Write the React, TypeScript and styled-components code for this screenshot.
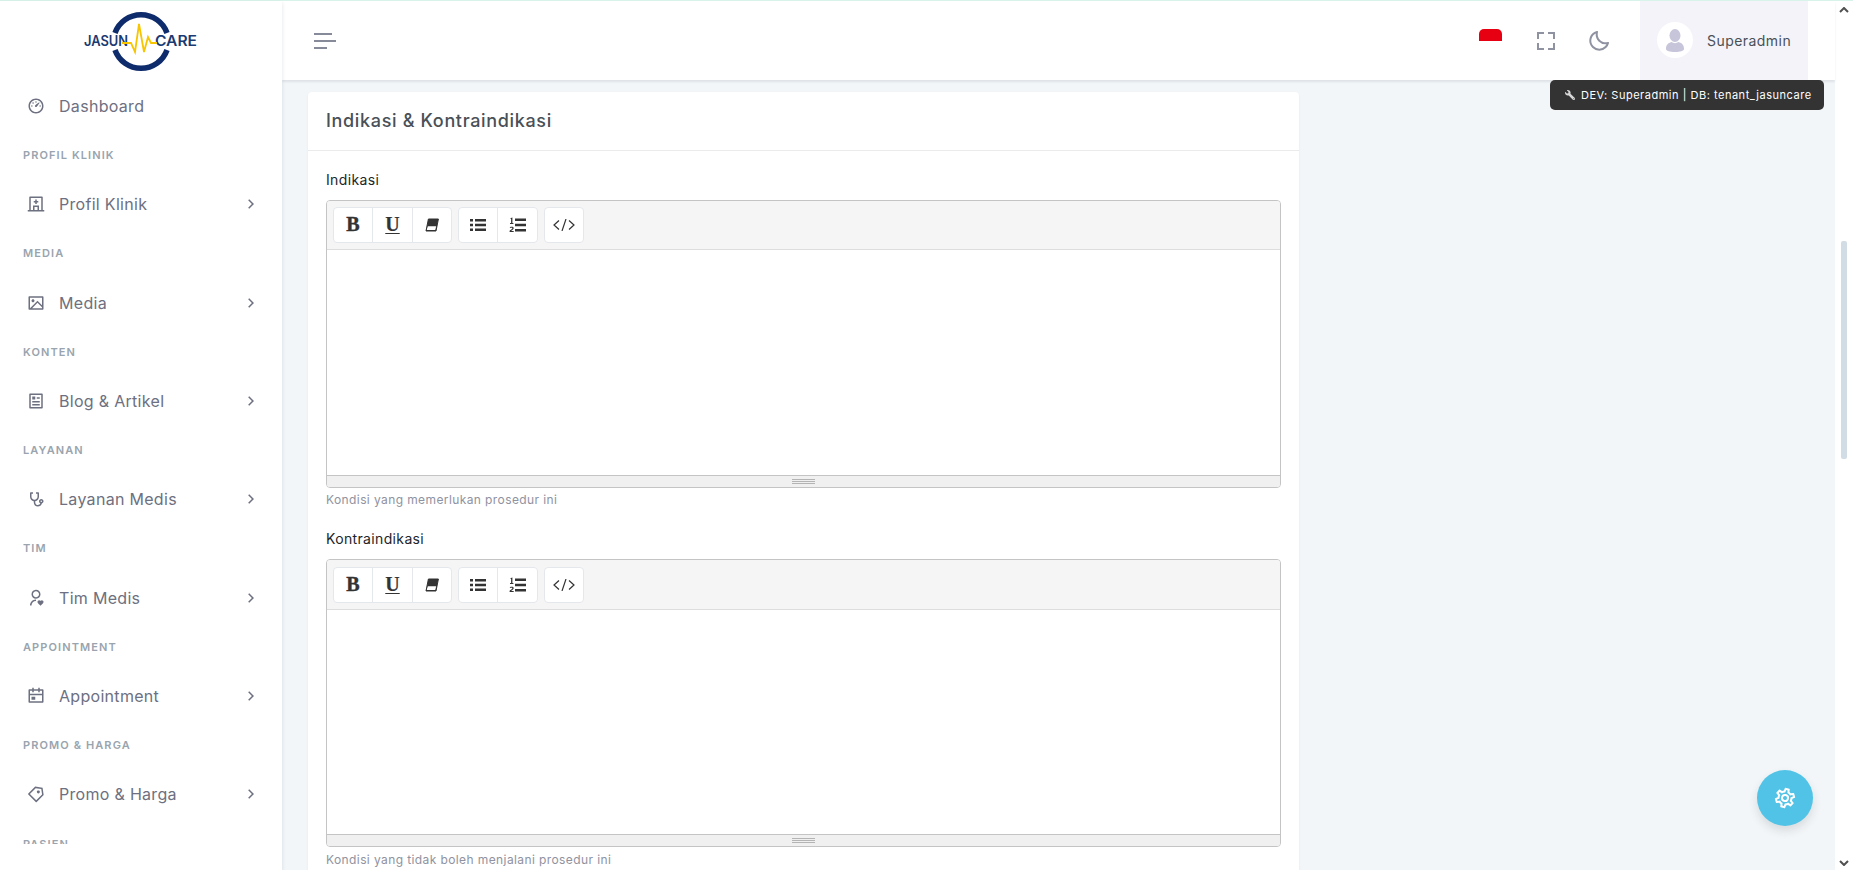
import React, { FC, ReactNode } from 'react';
import styled, { createGlobalStyle } from 'styled-components';
import {
  RiDashboard3Line,
  RiHospitalLine,
  RiImageLine,
  RiArticleLine,
  RiStethoscopeLine,
  RiUserHeartLine,
  RiCalendarEventLine,
  RiPriceTag3Line,
  RiArrowRightSLine,
} from 'react-icons/ri';
import { BiFullscreen, BiMoon } from 'react-icons/bi';
import { FaWrench } from 'react-icons/fa';

const GlobalStyle = createGlobalStyle`
  html, body {
    margin: 0;
    height: 100%;
    overflow: hidden;
    background: #fff;
    font-family: Inter, "Liberation Sans", sans-serif;
  }
  * {
    box-sizing: border-box;
  }
`;

const Page = styled.div`
  height: 870px;
  display: flex;
  flex-direction: column;
  border-top: 1px solid #d8f3e9;
`;

const Body = styled.div`
  flex: 1;
  min-height: 0;
  display: flex;
`;

const Sidebar = styled.aside`
  width: 282px;
  flex-shrink: 0;
  background: #fff;
  box-shadow: 0 2px 4px rgba(15, 34, 58, 0.12);
  z-index: 3;
`;

const LogoBox = styled.div`
  height: 80.2px;
  svg {
    display: block;
    margin-left: 71px;
  }
`;

const Nav = styled.nav`
  height: 762.8px;
  overflow: hidden;
`;

const NavItem = styled.div`
  height: 49.2px;
  display: flex;
  align-items: center;
  padding: 0 22px 0 27px;
  color: #6d7080;
  font-size: 16px;
  letter-spacing: 0.3px;
  svg:first-child {
    font-size: 18px;
    margin-right: 14px;
    flex-shrink: 0;
  }
`;

const NavText = styled.span`
  flex: 1;
`;

const NavTitle = styled.div`
  height: 49.2px;
  display: flex;
  align-items: center;
  padding-left: 23px;
  color: #99a4ae;
  font-size: 11px;
  font-weight: 600;
  letter-spacing: 1.1px;
  text-transform: uppercase;
`;

const Main = styled.div`
  flex: 1;
  min-width: 0;
  display: flex;
  flex-direction: column;
  background: #f2f6f9;
`;

const Topbar = styled.header`
  height: 79px;
  flex-shrink: 0;
  display: flex;
  align-items: stretch;
  background: #fff;
  box-shadow: 0 2px 2px rgba(56, 65, 74, 0.1);
  padding: 0 27px 0 32px;
  z-index: 2;
`;

const Hamburger = styled.div`
  align-self: center;
  display: flex;
  flex-direction: column;
  gap: 5px;
`;

const HamburgerLine = styled.span<{ $width: number }>`
  display: block;
  height: 2px;
  width: ${(p) => p.$width}px;
  background: #878a99;
`;

const TopbarRight = styled.div`
  margin-left: auto;
  display: flex;
  align-items: stretch;
`;

const Flag = styled.div`
  align-self: flex-start;
  margin: 28px 32.5px 0 0;
  width: 23px;
  height: 12px;
  background: #e70011;
  border-radius: 5px 5px 0 0;
`;

const TopIcon = styled.div<{ $gap: number }>`
  align-self: center;
  display: flex;
  color: #8f92a0;
  font-size: 24px;
  margin-right: ${(p) => p.$gap}px;
`;

const UserBox = styled.div`
  width: 168px;
  display: flex;
  align-items: center;
  gap: 14px;
  padding: 0 0 1px 17px;
  background: #f3f3f9;
  color: #495057;
  font-size: 14px;
  letter-spacing: 0.45px;
`;

const Avatar = styled.div`
  width: 36px;
  height: 36px;
  border-radius: 50%;
  background: #fff;
  display: flex;
  align-items: center;
  justify-content: center;
`;

const Content = styled.main`
  flex: 1;
  min-height: 0;
  overflow: hidden;
  padding: 12px 0 0 26px;
`;

const Card = styled.section`
  width: 991px;
  background: #fff;
  border-radius: 4px 4px 0 0;
  box-shadow: 0 1px 2px rgba(56, 65, 74, 0.08);
`;

const CardHeader = styled.h2`
  margin: 0;
  height: 59px;
  display: flex;
  align-items: center;
  padding: 0 18px 2px;
  border-bottom: 1px solid #e9ebec;
  color: #495057;
  font-size: 18px;
  font-weight: 500;
  letter-spacing: 0.66px;
`;

const CardBody = styled.div`
  padding: 18.6px 18px 20px;
`;

const Field = styled.div`
  margin-bottom: 20.2px;
`;

const Label = styled.div`
  color: #212529;
  font-size: 14px;
  line-height: 20px;
  letter-spacing: 0.35px;
  margin-bottom: 10px;
`;

const Help = styled.div`
  margin-top: 3.6px;
  color: #8f92a0;
  font-size: 12px;
  line-height: 18px;
  letter-spacing: 0.4px;
`;

const Editor = styled.div`
  border: 1px solid #c4c4c4;
  border-radius: 4px;
  overflow: hidden;
`;

const Toolbar = styled.div`
  display: flex;
  gap: 6px;
  height: 49.4px;
  padding: 6.4px 6px;
  background: #f5f5f5;
  border-bottom: 1px solid #dddddd;
`;

const ToolGroup = styled.div`
  display: flex;
  height: 36px;
  background: #fff;
  border: 1px solid #e4e7eb;
  border-radius: 4px;
`;

const ToolButton = styled.div<{ $width: number }>`
  width: ${(p) => p.$width}px;
  display: flex;
  align-items: center;
  justify-content: center;
  color: #333;
  & + & {
    border-left: 1px solid #e4e7eb;
  }
`;

const BoldGlyph = styled.span`
  font-family: "Liberation Serif", serif;
  font-weight: 700;
  font-size: 20px;
  -webkit-text-stroke: 0.4px #333;
`;

const UnderlineGlyph = styled(BoldGlyph)`
  text-decoration: underline;
  text-decoration-thickness: 1px;
  text-underline-offset: 2px;
  -webkit-text-stroke: 0.2px #333;
`;

const EditArea = styled.div`
  height: 224.6px;
  background: #fff;
`;

const StatusBar = styled.div`
  height: 12px;
  background: #f0f0f0;
  border-top: 1px solid #c4c4c4;
  display: flex;
  flex-direction: column;
  align-items: center;
  justify-content: center;
  gap: 1px;
`;

const Grip = styled.span`
  display: block;
  width: 23px;
  height: 1px;
  background: #b4b4b4;
`;

const Scrollbar = styled.div`
  width: 18px;
  flex-shrink: 0;
  background: #fff;
  position: relative;
  color: #505050;
`;

const ScrollArrow = styled.svg<{ $bottom?: boolean }>`
  position: absolute;
  left: 4px;
  ${(p) => (p.$bottom ? 'bottom: 4px;' : 'top: 6px;')}
`;

const ScrollThumb = styled.div`
  position: absolute;
  left: 6px;
  top: 240px;
  width: 6px;
  height: 218px;
  border-radius: 2px;
  background: #d2dce5;
`;

const DevBadge = styled.div`
  position: fixed;
  left: 1550px;
  top: 80px;
  width: 274px;
  height: 30px;
  display: flex;
  align-items: center;
  gap: 6px;
  padding-left: 15px;
  background: #333;
  border-radius: 5px;
  color: #fff;
  font-size: 11px;
  letter-spacing: 0.52px;
  white-space: nowrap;
  z-index: 5;
  svg {
    font-size: 10px;
    color: #d8d8d8;
    transform: scaleX(-1);
  }
`;

const Fab = styled.div`
  position: fixed;
  left: 1757px;
  top: 770px;
  width: 56px;
  height: 56px;
  border-radius: 50%;
  background: #50c3e6;
  box-shadow: 0 5px 10px rgba(30, 32, 37, 0.12);
  display: flex;
  align-items: center;
  justify-content: center;
  svg {
    transform: rotate(14deg);
  }
`;

const Logo: FC = () => (
  <svg width="140" height="80" viewBox="71 1 140 80">
    <path
      d="M115 33 A27.500 27 0 0 1 167 33 M167 50 A27.500 27 0 0 1 115 50"
      fill="none"
      stroke="#0e2c6b"
      strokeWidth="5.5"
    />
    <text
      x="84"
      y="46"
      fill="#1a3a72"
      fontFamily="Inter, sans-serif"
      fontWeight="600"
      fontSize="14"
      textLength={44}
      lengthAdjust="spacingAndGlyphs"
    >
      JASUN
    </text>
    <text
      x="155"
      y="46"
      fill="#1a3a72"
      fontFamily="Inter, sans-serif"
      fontWeight="600"
      fontSize="14"
      textLength={42}
      lengthAdjust="spacingAndGlyphs"
    >
      CARE
    </text>
    <polyline
      points="122,43 131,43 135,52 139,24 144,52 148,37 151,43 157,43"
      fill="none"
      stroke="#f7c600"
      strokeWidth="1.8"
    />
  </svg>
);

type MenuLink = { icon: ReactNode; text: string; arrow?: boolean };

const menu: (MenuLink | string)[] = [
  { icon: <RiDashboard3Line />, text: 'Dashboard' },
  'Profil Klinik',
  { icon: <RiHospitalLine />, text: 'Profil Klinik', arrow: true },
  'Media',
  { icon: <RiImageLine />, text: 'Media', arrow: true },
  'Konten',
  { icon: <RiArticleLine />, text: 'Blog & Artikel', arrow: true },
  'Layanan',
  { icon: <RiStethoscopeLine />, text: 'Layanan Medis', arrow: true },
  'Tim',
  { icon: <RiUserHeartLine />, text: 'Tim Medis', arrow: true },
  'Appointment',
  { icon: <RiCalendarEventLine />, text: 'Appointment', arrow: true },
  'Promo & Harga',
  { icon: <RiPriceTag3Line />, text: 'Promo & Harga', arrow: true },
  'Pasien',
];

const PersonIcon: FC = () => (
  <svg width="18" height="23" viewBox="0 0 18 23" fill="#c6c5d9">
    <ellipse cx="9" cy="6.500" rx="5.500" ry="6.500" />
    <path d="M0 20c0-4 2-6 5.500-7 2 1.500 5 1.500 7 0 3.500 1 5.500 3 5.500 7 0 2-4 3-9 3s-9-1-9-3z" />
  </svg>
);

const EraserIcon: FC = () => (
  <svg width="14" height="14" viewBox="0 0 14 14">
    <path d="M3.400 1h10l-2.400 12H1z" fill="#333" />
    <path d="M2.600 8.200h8.600l-.9 3.800H1.800z" fill="#fff" />
    <path d="M3.400 1h10l-2.400 12H1z" fill="none" stroke="#333" strokeWidth="1" />
  </svg>
);

const ListIcon: FC = () => (
  <svg width="16" height="14" viewBox="0 0 16 14" fill="#333">
    <path d="M0 1h3v2.400H0zM5 1h11v2.400H5zM0 5.800h3v2.400H0zM5 5.800h11v2.400H5zM0 10.600h3V13H0zM5 10.600h11V13H5z" />
  </svg>
);

const OrderedIcon: FC = () => (
  <svg width="17" height="16" viewBox="0 0 17 16" fill="#333">
    <path d="M6 1.500h11v2.400H6zM6 6.800h11v2.400H6zM6 12.100h11v2.400H6z" />
    <path d="M2 1l1.400-.6V6h1v1H1V6h1.100V2H1.200zM.6 15v-1c0-1 2.800-1.700 2.800-2.800 0-.6-1.600-.6-2.500 0V10.300c1.300-.7 3.800-.7 3.800.9 0 1.300-1.900 2-2.600 2.800h2.600v1z" />
  </svg>
);

const CodeIcon: FC = () => (
  <svg width="22" height="12" viewBox="0 0 22 12" fill="none" stroke="#333" strokeWidth="1.200">
    <path d="M6 1.500 1 6l5 4.500M16 1.500 21 6l-5 4.500M13 0 9 12" />
  </svg>
);

const CogIcon: FC = () => (
  <svg width="24" height="24" viewBox="0 0 24 24" fill="#fff">
    <path d="M12,8A4,4 0 0,1 16,12A4,4 0 0,1 12,16A4,4 0 0,1 8,12A4,4 0 0,1 12,8M12,10A2,2 0 0,0 10,12A2,2 0 0,0 12,14A2,2 0 0,0 14,12A2,2 0 0,0 12,10M10,22C9.75,22 9.54,21.82 9.5,21.58L9.13,18.93C8.5,18.68 7.96,18.34 7.44,17.94L4.95,18.95C4.73,19.03 4.46,18.95 4.34,18.73L2.34,15.27C2.21,15.05 2.27,14.78 2.46,14.63L4.57,12.97L4.5,12L4.57,11L2.46,9.37C2.27,9.22 2.21,8.95 2.34,8.73L4.34,5.27C4.46,5.05 4.73,4.96 4.95,5.05L7.44,6.05C7.96,5.66 8.5,5.32 9.13,5.07L9.5,2.42C9.54,2.18 9.75,2 10,2H14C14.25,2 14.46,2.18 14.5,2.42L14.87,5.07C15.5,5.32 16.04,5.66 16.56,6.06L19.05,5.05C19.27,4.96 19.54,5.05 19.66,5.27L21.66,8.73C21.79,8.95 21.73,9.22 21.54,9.37L19.43,11L19.5,12L19.43,13L21.54,14.63C21.73,14.78 21.79,15.05 21.66,15.27L19.66,18.73C19.54,18.95 19.27,19.04 19.05,18.95L16.56,17.95C16.04,18.34 15.5,18.68 14.87,18.93L14.5,21.58C14.46,21.82 14.25,22 14,22H10M11.25,4L10.88,6.61C9.68,6.86 8.62,7.5 7.85,8.39L5.44,7.35L4.69,8.65L6.8,10.2C6.4,11.37 6.4,12.64 6.8,13.8L4.68,15.36L5.43,16.66L7.86,15.62C8.63,16.5 9.68,17.14 10.87,17.38L11.24,20H12.76L13.13,17.39C14.32,17.14 15.37,16.5 16.14,15.62L18.57,16.66L19.32,15.36L17.2,13.81C17.6,12.64 17.6,11.37 17.2,10.2L19.31,8.65L18.56,7.35L16.15,8.39C15.38,7.5 14.32,6.86 13.12,6.62L12.75,4H11.25Z" />
  </svg>
);

const RichEditor: FC = () => (
  <Editor>
    <Toolbar>
      <ToolGroup>
        <ToolButton $width={38}>
          <BoldGlyph>B</BoldGlyph>
        </ToolButton>
        <ToolButton $width={40}>
          <UnderlineGlyph>U</UnderlineGlyph>
        </ToolButton>
        <ToolButton $width={39}>
          <EraserIcon />
        </ToolButton>
      </ToolGroup>
      <ToolGroup>
        <ToolButton $width={38}>
          <ListIcon />
        </ToolButton>
        <ToolButton $width={40}>
          <OrderedIcon />
        </ToolButton>
      </ToolGroup>
      <ToolGroup>
        <ToolButton $width={38}>
          <CodeIcon />
        </ToolButton>
      </ToolGroup>
    </Toolbar>
    <EditArea />
    <StatusBar>
      <Grip />
      <Grip />
      <Grip />
    </StatusBar>
  </Editor>
);

const App: FC = () => (
  <>
    <GlobalStyle />
    <Page>
      <Body>
        <Sidebar>
          <LogoBox>
            <Logo />
          </LogoBox>
          <Nav>
            {menu.map((entry, i) =>
              typeof entry === 'string' ? (
                <NavTitle key={i}>{entry}</NavTitle>
              ) : (
                <NavItem key={i}>
                  {entry.icon}
                  <NavText>{entry.text}</NavText>
                  {entry.arrow && <RiArrowRightSLine size={18} />}
                </NavItem>
              ),
            )}
          </Nav>
        </Sidebar>
        <Main>
          <Topbar>
            <Hamburger>
              <HamburgerLine $width={18} />
              <HamburgerLine $width={22} />
              <HamburgerLine $width={13} />
            </Hamburger>
            <TopbarRight>
              <Flag />
              <TopIcon $gap={29}>
                <BiFullscreen />
              </TopIcon>
              <TopIcon $gap={29}>
                <BiMoon />
              </TopIcon>
              <UserBox>
                <Avatar>
                  <PersonIcon />
                </Avatar>
                Superadmin
              </UserBox>
            </TopbarRight>
          </Topbar>
          <Content>
            <Card>
              <CardHeader>Indikasi &amp; Kontraindikasi</CardHeader>
              <CardBody>
                <Field>
                  <Label>Indikasi</Label>
                  <RichEditor />
                  <Help>Kondisi yang memerlukan prosedur ini</Help>
                </Field>
                <Field>
                  <Label>Kontraindikasi</Label>
                  <RichEditor />
                  <Help>Kondisi yang tidak boleh menjalani prosedur ini</Help>
                </Field>
              </CardBody>
            </Card>
          </Content>
        </Main>
        <Scrollbar>
          <ScrollArrow width="10" height="6" viewBox="0 0 10 6">
            <path d="M1 5l4-4 4 4" fill="none" stroke="currentColor" strokeWidth="2" />
          </ScrollArrow>
          <ScrollThumb />
          <ScrollArrow $bottom width="10" height="6" viewBox="0 0 10 6">
            <path d="M1 1l4 4 4-4" fill="none" stroke="currentColor" strokeWidth="2" />
          </ScrollArrow>
        </Scrollbar>
      </Body>
      <DevBadge>
        <FaWrench />
        DEV: Superadmin | DB: tenant_jasuncare
      </DevBadge>
      <Fab>
        <CogIcon />
      </Fab>
    </Page>
  </>
);

export default App;
